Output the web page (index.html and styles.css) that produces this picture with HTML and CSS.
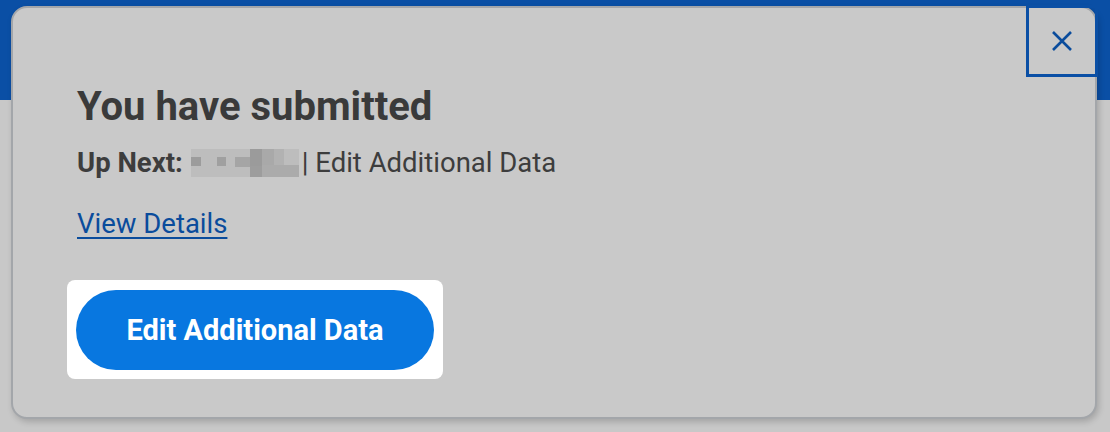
FILE: index.html
```html
<!DOCTYPE html>
<html lang="en">
<head>
<meta charset="utf-8">
<title>Submitted</title>
<link rel="stylesheet" href="styles.css">
</head>
<body>
<div class="page">
  <header class="band"></header>
  <main class="below"></main>
</div>
<section class="modal" role="dialog" aria-labelledby="mtitle">
  <button class="close" aria-label="Close">
    <svg width="22" height="22" viewBox="0 0 22 22"><path d="M2 2 L20 20 M20 2 L2 20" stroke="#0a4c9c" stroke-width="2.6" fill="none"/></svg>
  </button>
  <h1 id="mtitle" class="title">You have submitted</h1>
  <p class="next"><strong>Up Next:</strong> <svg class="pix" width="108" height="28" viewBox="0 0 108 28">
      <rect x="0" y="0" width="108" height="28" fill="#bdbdbd"/>
      <rect x="0" y="8" width="10" height="9" fill="#9c9c9c"/>
      <rect x="26" y="8" width="9" height="9" fill="#a0a0a0"/>
      <rect x="44" y="8" width="15" height="10" fill="#a5a5a5"/>
      <rect x="59" y="0" width="12" height="17" fill="#9b9b9b"/>
      <rect x="71" y="0" width="12" height="16" fill="#a9a9a9"/>
      <rect x="83" y="0" width="10" height="16" fill="#b2b2b2"/>
      <rect x="59" y="17" width="12" height="11" fill="#9d9d9d"/>
      <rect x="71" y="16" width="37" height="12" fill="#ababab"/>
    </svg>| Edit Additional Data</p>
  <a class="details" href="#">View Details</a>
  <div class="focus">
    <button class="primary">Edit Additional Data</button>
  </div>
</section>
</body>
</html>
```

FILE: styles.css
```css
* { box-sizing: border-box; }
html, body { margin: 0; padding: 0; }
body {
  width: 1110px;
  height: 432px;
  overflow: hidden;
  font-family: Roboto, "Liberation Sans", Arial, sans-serif;
  background: #c8c8c8;
  position: relative;
}
.page { display: flex; flex-direction: column; height: 100%; }
.band { height: 100px; background: #0a4fa5; flex: none; }
.below { flex: 1; background: #c8c8c8; }

.modal {
  position: absolute;
  left: 11px;
  top: 6px;
  width: 1086px;
  height: 413px;
  background: #c9c9c9;
  border: 2px solid #a3a6aa;
  border-radius: 16px;
  box-shadow: 2px 3px 6px rgba(0,0,0,0.18);
  padding: 75px 0 0 64px;
  display: flex;
  flex-direction: column;
  align-items: flex-start;
}
.close {
  position: absolute;
  top: -3px;
  right: -3px;
  width: 72px;
  height: 72px;
  border: 3px solid #0a4fa5;
  background: transparent;
  padding: 0;
  display: flex;
  align-items: center;
  justify-content: center;
  cursor: pointer;
}
.title {
  margin: 0;
  font-size: 40px;
  font-weight: 700;
  color: #3a3a3a;
  line-height: 48px;
}
.next {
  margin: 16px 0 0;
  font-size: 27.5px;
  color: #3d3d3d;
  line-height: 32px;
  display: flex;
  align-items: center;
}
.next strong { font-weight: 700; margin-right: 8px; }
.pix { display: block; margin-right: 3px; }
.details {
  margin-top: 29px;
  font-size: 27.5px;
  line-height: 32px;
  color: #0a4c9c;
  text-decoration: underline;
  text-underline-offset: 4px;
}
.focus {
  margin: 40px 0 0 -10px;
  background: #ffffff;
  border-radius: 8px;
  padding: 10px 9px 9px;
}
.primary {
  display: block;
  width: 358px;
  height: 80px;
  border: none;
  border-radius: 40px;
  background: #0877e0;
  color: #ffffff;
  font-family: Roboto, "Liberation Sans", Arial, sans-serif;
  font-size: 29px;
  font-weight: 700;
  cursor: pointer;
}
```
